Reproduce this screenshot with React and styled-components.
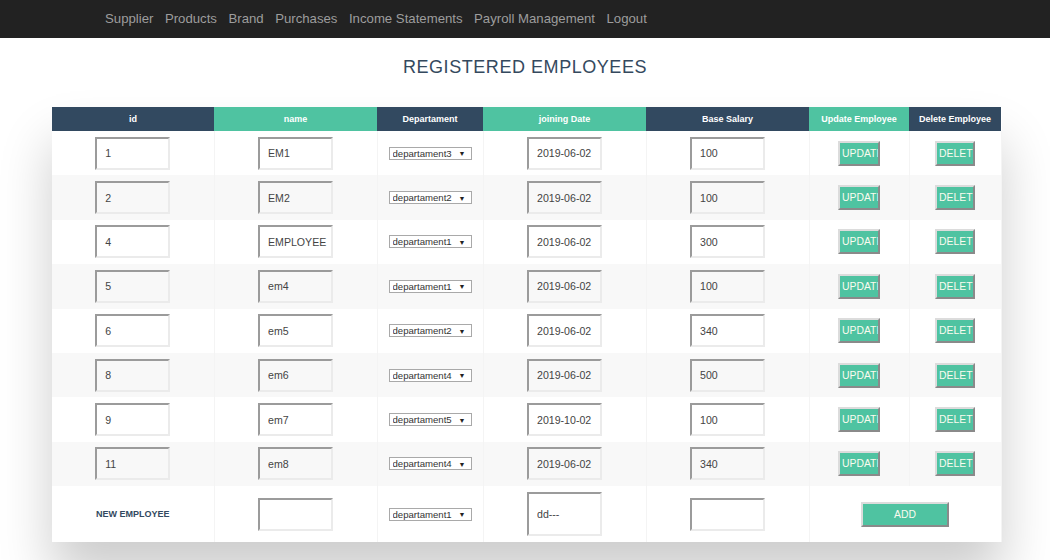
import React from "react";
import styled, { createGlobalStyle } from "styled-components";

const GlobalStyle = createGlobalStyle`
  html, body { margin: 0; padding: 0; background: #fff; }
  body { font-family: "Liberation Sans", Arial, sans-serif; }
`;

const NavBar = styled.nav`
  height: 38px;
  background: #222;
  display: flex;
  align-items: center;
  padding-left: 105px;
  gap: 11.5px;
`;

const NavLink = styled.a`
  color: #9d9d9d;
  font-size: 13.2px;
  text-decoration: none;
  line-height: 1;
`;

const Title = styled.h2`
  margin: 18px 0 0;
  text-align: center;
  font-size: 18px;
  line-height: 22px;
  font-weight: normal;
  letter-spacing: 0.55px;
  color: #34495e;
`;

const TableWrap = styled.div`
  margin: 29px 49px 40px 52px;
`;

const Table = styled.table`
  width: 949px;
  border-collapse: collapse;
  table-layout: fixed;
  background: #fff;
  box-shadow: 0 35px 50px rgba(0, 0, 0, 0.2);
`;

const Col = styled.col`
  width: ${(p) => p.$w}px;
`;

const Th = styled.th`
  box-sizing: border-box;
  height: 24px;
  padding: 0 2px 1px;
  background: ${(p) => (p.$green ? "#4fc3a1" : "#324960")};
  color: #fff;
  font-size: 9px;
  font-weight: bold;
  text-align: center;
  white-space: nowrap;
  overflow: hidden;
`;

const Row = styled.tr`
  height: ${(p) => (p.$tall ? 56 : 44.4)}px;
  background: ${(p) => (p.$alt ? "#f8f8f8" : "#fff")};
`;

const Td = styled.td`
  box-sizing: border-box;
  padding: 0;
  text-align: center;
  vertical-align: middle;
  border-right: 1px solid #f4f4f4;
  font-size: 9px;
`;

const Field = styled.input`
  box-sizing: border-box;
  width: 75px;
  height: ${(p) => (p.$tall ? 44 : 33)}px;
  padding: 0 0 0 8px;
  border-style: solid;
  border-width: 2px;
  border-color: #9b9b9b #ebebeb #ebebeb #9b9b9b;
  background: transparent;
  font-family: "Liberation Sans", Arial, sans-serif;
  font-size: 10.6px;
  color: #444;
  outline: none;
  vertical-align: middle;
`;

const SelectBox = styled.span`
  position: relative;
  display: inline-block;
  vertical-align: middle;
  &::after {
    content: "▼";
    position: absolute;
    right: 6px;
    top: 50%;
    transform: translateY(-50%);
    font-size: 7px;
    color: #222;
    pointer-events: none;
  }
`;

const Select = styled.select`
  appearance: none;
  -webkit-appearance: none;
  box-sizing: border-box;
  width: 83px;
  height: 13px;
  padding: 0 0 0 3px;
  margin: 0;
  border: 1px solid #a9a9a9;
  border-radius: 0;
  background: #fff;
  font-family: "Liberation Sans", Arial, sans-serif;
  font-size: 9.6px;
  line-height: 11px;
  color: #333;
  display: block;
`;

const ActionButton = styled.button`
  box-sizing: border-box;
  width: ${(p) => p.$w}px;
  height: 25px;
  padding: 0 ${(p) => (p.$center ? 0 : 2)}px;
  border-style: solid;
  border-width: 2px;
  border-color: #dcdcdc #8a8a8a #8a8a8a #dcdcdc;
  background: #4fc3a1;
  color: #fbfbef;
  font-family: "Liberation Sans", Arial, sans-serif;
  font-size: 10.4px;
  text-align: ${(p) => (p.$center ? "center" : "left")};
  white-space: nowrap;
  overflow: hidden;
  vertical-align: middle;
  cursor: pointer;
`;

const NewLabel = styled.span`
  font-size: 9px;
  font-weight: bold;
  color: #324960;
`;

const links = [
  "Supplier",
  "Products",
  "Brand",
  "Purchases",
  "Income Statements",
  "Payroll Management",
  "Logout",
];

const cols = [
  { label: "id", w: 162 },
  { label: "name", w: 163, green: true },
  { label: "Departament", w: 106 },
  { label: "joining Date", w: 163, green: true },
  { label: "Base Salary", w: 163 },
  { label: "Update Employee", w: 100, green: true },
  { label: "Delete Employee", w: 92 },
];

const employees = [
  { id: "1", name: "EM1", dep: "departament3", date: "2019-06-02", salary: "100" },
  { id: "2", name: "EM2", dep: "departament2", date: "2019-06-02", salary: "100" },
  { id: "4", name: "EMPLOYEE", dep: "departament1", date: "2019-06-02", salary: "300" },
  { id: "5", name: "em4", dep: "departament1", date: "2019-06-02", salary: "100" },
  { id: "6", name: "em5", dep: "departament2", date: "2019-06-02", salary: "340" },
  { id: "8", name: "em6", dep: "departament4", date: "2019-06-02", salary: "500" },
  { id: "9", name: "em7", dep: "departament5", date: "2019-10-02", salary: "100" },
  { id: "11", name: "em8", dep: "departament4", date: "2019-06-02", salary: "340" },
];

const deps = ["departament1", "departament2", "departament3", "departament4", "departament5"];

function DepSelect({ value }) {
  return (
    <SelectBox>
      <Select defaultValue={value}>
        {deps.map((d) => (
          <option key={d} value={d}>
            {d}
          </option>
        ))}
      </Select>
    </SelectBox>
  );
}

export default function App() {
  return (
    <>
      <GlobalStyle />
      <NavBar>
        {links.map((l) => (
          <NavLink key={l} href="#">
            {l}
          </NavLink>
        ))}
      </NavBar>
      <Title>REGISTERED EMPLOYEES</Title>
      <TableWrap>
        <Table>
          <colgroup>
            {cols.map((c) => (
              <Col key={c.label} $w={c.w} />
            ))}
          </colgroup>
          <thead>
            <tr>
              {cols.map((c) => (
                <Th key={c.label} $green={c.green}>
                  {c.label}
                </Th>
              ))}
            </tr>
          </thead>
          <tbody>
            {employees.map((e, i) => (
              <Row key={e.id} $alt={i % 2 === 1}>
                <Td>
                  <Field defaultValue={e.id} />
                </Td>
                <Td>
                  <Field defaultValue={e.name} />
                </Td>
                <Td>
                  <DepSelect value={e.dep} />
                </Td>
                <Td>
                  <Field defaultValue={e.date} />
                </Td>
                <Td>
                  <Field defaultValue={e.salary} />
                </Td>
                <Td>
                  <ActionButton $w={42}>UPDATE</ActionButton>
                </Td>
                <Td>
                  <ActionButton $w={40}>DELETE</ActionButton>
                </Td>
              </Row>
            ))}
            <Row $tall>
              <Td>
                <NewLabel>NEW EMPLOYEE</NewLabel>
              </Td>
              <Td>
                <Field />
              </Td>
              <Td>
                <DepSelect value="departament1" />
              </Td>
              <Td>
                <Field $tall defaultValue="dd---" />
              </Td>
              <Td>
                <Field />
              </Td>
              <Td colSpan={2}>
                <ActionButton $w={88} $center>
                  ADD
                </ActionButton>
              </Td>
            </Row>
          </tbody>
        </Table>
      </TableWrap>
    </>
  );
}
